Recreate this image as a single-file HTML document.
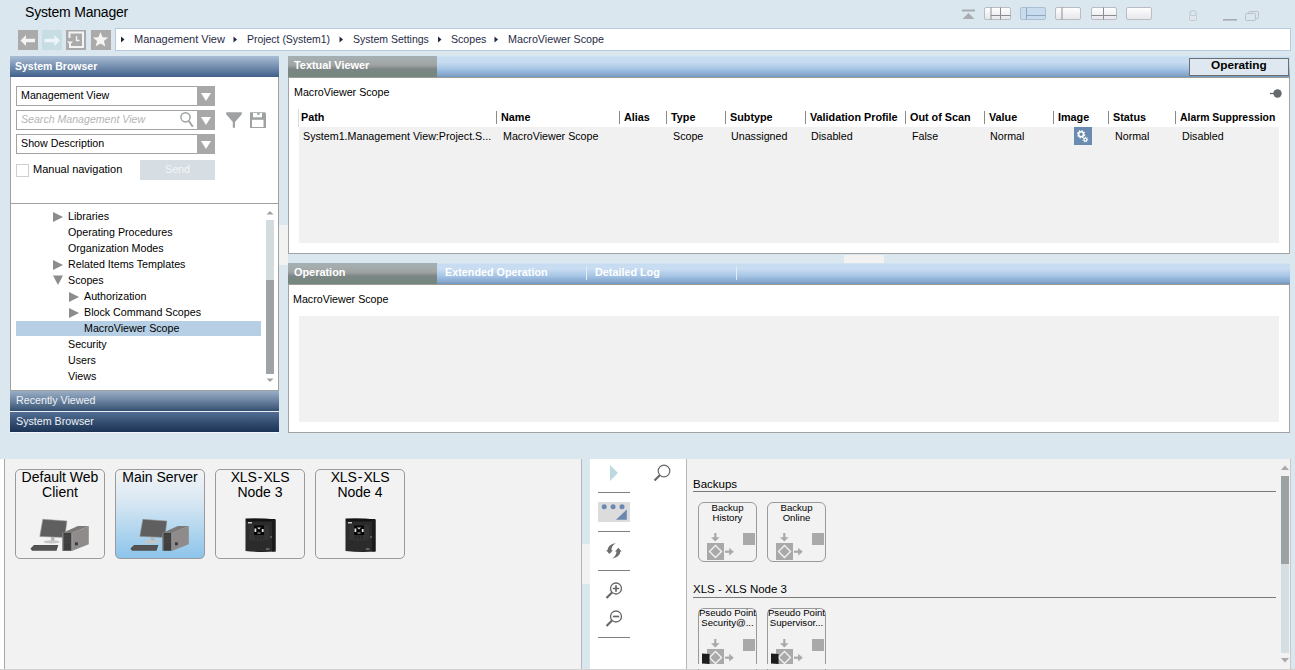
<!DOCTYPE html>
<html><head><meta charset="utf-8">
<style>
*{box-sizing:border-box;margin:0;padding:0}
html,body{width:1295px;height:670px;overflow:hidden;background:#dae7ef;font-family:"Liberation Sans",sans-serif;color:#000}
.a{position:absolute}
.t{position:absolute;white-space:nowrap;font-size:10.7px;line-height:13px}
.b{font-weight:bold}
</style></head><body>

<!-- Title -->
<div class="t" style="left:25px;top:4px;font-size:14px;letter-spacing:-0.2px;line-height:16px;color:#000">System Manager</div>

<!-- top right layout icons -->
<svg class="a" style="left:0;top:0" width="1295" height="28">
 <defs><linearGradient id="lg" x1="0" y1="0" x2="0" y2="1"><stop offset="0" stop-color="#ffffff"/><stop offset="1" stop-color="#e6e6ec"/></linearGradient></defs>
 <rect x="962" y="9.5" width="13" height="2" fill="#a9acaf"/>
 <path d="M962.5 19 L968.5 13 L974.5 19 Z" fill="#a9acaf"/>
 <rect x="984.5" y="7.5" width="26" height="12" rx="1.5" fill="url(#lg)" stroke="#b9bcc0"/>
 <path d="M991 7.5 V19.5 M1000.5 7.5 V19.5 M991 15.5 H1010.5" stroke="#8a8d90" stroke-width="1" fill="none"/>
 <rect x="1020.5" y="7.5" width="25" height="12" rx="1.5" fill="#c9dcee" stroke="#a9c0d6"/>
 <path d="M1026.5 7.5 V19.5 M1026.5 15.5 H1045.5" stroke="#8ea7c0" stroke-width="1" fill="none"/>
 <rect x="1055.5" y="7.5" width="25" height="12" rx="1.5" fill="url(#lg)" stroke="#b9bcc0"/>
 <path d="M1062 7.5 V19.5" stroke="#8a8d90" stroke-width="1" fill="none"/>
 <rect x="1091.5" y="7.5" width="25" height="12" rx="1.5" fill="url(#lg)" stroke="#b9bcc0"/>
 <path d="M1103.5 7.5 V19.5 M1091.5 15.5 H1116.5" stroke="#8a8d90" stroke-width="1" fill="none"/>
 <rect x="1126.5" y="7.5" width="25" height="12" rx="1.5" fill="url(#lg)" stroke="#b9bcc0"/>
 <path d="M1190 16 V13.5 A3 3 0 0 1 1196 13.5 V16" stroke="#c3cbd2" stroke-width="1.2" fill="none"/>
 <rect x="1189.5" y="15.5" width="7" height="5" rx="1" fill="#dfe6ec" stroke="#c3cbd2"/>
 <rect x="1223" y="19" width="14" height="1.6" fill="#a7abae"/>
 <rect x="1248.5" y="11.5" width="10" height="7" rx="1" fill="none" stroke="#b9c0c6"/>
 <rect x="1245.5" y="13.5" width="10" height="7" rx="1" fill="#dae7ef" stroke="#b9c0c6"/>
</svg>

<!-- toolbar buttons -->
<svg class="a" style="left:0;top:0" width="120" height="56">
 <rect x="18" y="30" width="20" height="20" fill="#aaaaaa"/>
 <path d="M20.5 40.5 L26 35 V38.8 H35 V42.3 H26 V46 Z" fill="#f4f4f4"/>
 <rect x="42" y="30" width="20" height="20" fill="#c5dde3"/>
 <path d="M60 40.5 L54.5 35 V38.8 H44.5 V42.3 H54.5 V46 Z" fill="#eef5f7"/>
 <rect x="66" y="30" width="20" height="20" fill="#aaaaaa"/>
 <path d="M69.5 38 V32.5 H83 V47 H70 V44" stroke="#f4f4f4" stroke-width="2" fill="none"/>
 <path d="M67 41.5 L70 44.8 L73 41.5 Z" fill="#f4f4f4"/>
 <path d="M76.5 36 V40.5 H79.5" stroke="#f4f4f4" stroke-width="1.3" fill="none"/>
 <rect x="91" y="30" width="20" height="20" fill="#aaaaaa"/>
 <path d="M100.5 32 L102.6 37.3 L108.2 37.5 L103.9 41 L105.4 46.5 L100.5 43.4 L95.6 46.5 L97.1 41 L92.8 37.5 L98.4 37.3 Z" fill="#f4f4f4"/>
</svg>
<!-- breadcrumb -->
<div class="a" style="left:115px;top:28px;width:1176px;height:23px;background:#fff;border:1px solid #b6cadd"></div>
<svg class="a" style="left:115px;top:28px" width="500" height="23">
 <path d="M6 8.5 L9.5 11.5 L6 14.5 Z" fill="#1c2840"/>
 <path d="M118.5 8.5 L122 11.5 L118.5 14.5 Z" fill="#1c2840"/>
 <path d="M224.5 8.5 L228 11.5 L224.5 14.5 Z" fill="#1c2840"/>
 <path d="M323 8.5 L326.5 11.5 L323 14.5 Z" fill="#1c2840"/>
 <path d="M379.5 8.5 L383 11.5 L379.5 14.5 Z" fill="#1c2840"/>
</svg>
<div class="t" style="left:134px;top:33px;color:#1f2b45;font-size:11px">Management View</div>
<div class="t" style="left:247px;top:33px;color:#1f2b45;font-size:10.45px">Project (System1)</div>
<div class="t" style="left:353px;top:33px;color:#1f2b45;font-size:10.5px">System Settings</div>
<div class="t" style="left:451px;top:33px;color:#1f2b45;font-size:10.6px">Scopes</div>
<div class="t" style="left:508px;top:33px;color:#1f2b45;font-size:10.75px">MacroViewer Scope</div>

<!-- LEFT PANEL -->
<div class="a" style="left:10px;top:56px;width:269px;height:21px;background:linear-gradient(#aabed5,#41608a)"></div>
<div class="t b" style="left:15px;top:60px;color:#fff;font-size:10.5px">System Browser</div>
<div class="a" style="left:10px;top:77px;width:269px;height:314px;background:#fff;border-left:1px solid #a0a0a0;border-right:1px solid #a0a0a0"></div>
<div class="a" style="left:10px;top:203px;width:269px;height:1px;background:#a0a0a0"></div>
<div class="a" style="left:10px;top:390px;width:269px;height:1px;background:#a0a0a0"></div>
<div class="a" style="left:10px;top:391px;width:269px;height:20px;background:linear-gradient(#9aaec4,#6f87a4 45%,#34506f)"></div>
<div class="a" style="left:10px;top:411px;width:269px;height:1px;background:#e8eef3"></div>
<div class="a" style="left:10px;top:412px;width:269px;height:20px;background:linear-gradient(#536f94,#344f72 50%,#1c3354)"></div>
<div class="a" style="left:10px;top:432px;width:269px;height:1px;background:#f4f7f9"></div>

<!-- left panel content -->
<div class="a" style="left:16px;top:86px;width:199px;height:20px;background:#fff;border:1px solid #a3a3a3"></div>
<div class="a" style="left:197px;top:86px;width:18px;height:20px;background:#a8a8a8"></div>
<div class="t" style="left:21px;top:89px;color:#000">Management View</div>
<div class="a" style="left:16px;top:110px;width:199px;height:20px;background:#fff;border:1px solid #a3a3a3"></div>
<div class="a" style="left:197px;top:110px;width:18px;height:20px;background:#a8a8a8"></div>
<div class="t" style="left:21px;top:113px;color:#b4b4b4;font-style:italic;font-size:10.6px">Search Management View</div>
<div class="a" style="left:16px;top:134px;width:199px;height:20px;background:#fff;border:1px solid #a3a3a3"></div>
<div class="a" style="left:197px;top:134px;width:18px;height:20px;background:#a8a8a8"></div>
<div class="t" style="left:21px;top:137px;color:#000">Show Description</div>
<svg class="a" style="left:0;top:80px" width="278" height="110">
 <path d="M201 13 H211 L206 21 Z" fill="#fff"/>
 <path d="M201 37 H211 L206 45 Z" fill="#fff"/>
 <path d="M201 61 H211 L206 69 Z" fill="#fff"/>
 <circle cx="185.5" cy="37.3" r="4.6" fill="none" stroke="#9ea2a3" stroke-width="1.5"/>
 <path d="M188.8 41 L192.8 46.8" stroke="#9ea2a3" stroke-width="1.8"/>
 <path d="M226.2 32.2 H241.8 V34.2 L235 42 V47.7 H232.8 V42 L226.2 34.2 Z" fill="#9ea2a3"/>
 <path d="M250 32.2 H265 L266 33.2 V48 H250 Z" fill="#9ea2a3"/>
 <rect x="253" y="33" width="9" height="4.3" fill="#fff"/>
 <rect x="257.2" y="33" width="2.5" height="1.8" fill="#9ea2a3"/>
 <rect x="252" y="39.8" width="11.5" height="7.2" fill="#fff"/>
 <rect x="16.5" y="84.5" width="12" height="12" fill="#fff" stroke="#cfcfcf"/>
</svg>
<div class="t" style="left:33px;top:163px;color:#000;font-size:11px">Manual navigation</div>
<div class="a" style="left:140px;top:160px;width:75px;height:20px;background:#d7dee3"></div>
<div class="t" style="left:165px;top:163px;color:#f2f5f7">Send</div>
<!-- tree -->
<div class="a" style="left:16px;top:321px;width:245px;height:15px;background:#b6cfe5"></div>
<svg class="a" style="left:0;top:200px" width="278" height="190">
 <path d="M53 12 L63 17 L53 22 Z" fill="#8c8c8c"/>
 <path d="M53 60 L63 65 L53 70 Z" fill="#8c8c8c"/>
 <path d="M53 75.5 L63 75.5 L58 85 Z" fill="#8c8c8c"/>
 <path d="M69 92 L79 97 L69 102 Z" fill="#8c8c8c"/>
 <path d="M69 108 L79 113 L69 118 Z" fill="#8c8c8c"/>
 <rect x="266" y="20" width="8" height="154" fill="#d3dbdf"/>
 <rect x="266" y="80" width="8" height="94" fill="#9ea3a5"/>
 <path d="M266.5 14.5 L270 11 L273.5 14.5 Z" fill="#9ea3a5"/>
 <path d="M266.5 178.5 L270 182 L273.5 178.5 Z" fill="#9ea3a5"/>
</svg>
<div class="t" style="left:68px;top:210px">Libraries</div>
<div class="t" style="left:68px;top:226px">Operating Procedures</div>
<div class="t" style="left:68px;top:242px">Organization Modes</div>
<div class="t" style="left:68px;top:258px">Related Items Templates</div>
<div class="t" style="left:68px;top:274px">Scopes</div>
<div class="t" style="left:84px;top:290px">Authorization</div>
<div class="t" style="left:84px;top:306px">Block Command Scopes</div>
<div class="t" style="left:84px;top:322px">MacroViewer Scope</div>
<div class="t" style="left:68px;top:338px">Security</div>
<div class="t" style="left:68px;top:354px">Users</div>
<div class="t" style="left:68px;top:370px">Views</div>
<div class="t" style="left:16px;top:394px;color:#eef2f6">Recently Viewed</div>
<div class="t" style="left:16px;top:415px;color:#eef2f6">System Browser</div>

<!-- RIGHT TOP PANEL -->
<div class="a" style="left:288px;top:56px;width:1002px;height:21px;background:linear-gradient(#dce9f5 0px,#c6dcf0 1px,#c9ddf2 6px,#b4cfea 10px,#a7c5e5 13px,#93b4da 16px,#8cabd0 18px,#8ba7c4 19px,#729dc6 20px,#729dc6 21px)"></div>
<div class="a" style="left:288px;top:56px;width:149px;height:21px;background:linear-gradient(#a3afb3 0px,#a5acad 4px,#9fa4a3 9px,#8f9695 11px,#7b8685 13px,#778680 17px,#738880 21px)"></div>
<div class="a" style="left:288px;top:77px;width:1002px;height:177px;background:#fff;border:1px solid #a3a3a3;border-top:1px solid #a09a94"></div>
<div class="a" style="left:299px;top:127px;width:980px;height:116px;background:#f1f1f1"></div>

<!-- right top content -->
<div class="t b" style="left:294px;top:59px;color:#fff;font-size:10.9px">Textual Viewer</div>
<div class="a" style="left:1189px;top:58px;width:100px;height:18px;background:#dfe8f0;border:1px solid #6f6f6f"></div>
<div class="t b" style="left:1211px;top:58px;color:#000;font-size:11.8px;line-height:14px">Operating</div>
<svg class="a" style="left:1260px;top:85px" width="30" height="18">
 <path d="M10 8.5 H16" stroke="#666a6c" stroke-width="1.3"/>
 <circle cx="17.5" cy="8.5" r="4.2" fill="#666a6c"/>
</svg>
<div class="t" style="left:294px;top:86px">MacroViewer Scope</div>
<div class="a" style="left:298px;top:109px;width:1px;height:18px;background:#dcdcdc"></div>
<svg class="a" style="left:0;top:108px" width="1295" height="20">
 <path d="M496.5 3 V16 M619.5 3 V16 M666.5 3 V16 M725.5 3 V16 M805.5 3 V16 M905.5 3 V16 M984.5 3 V16 M1053.5 3 V16 M1108.5 3 V16 M1175.5 3 V16" stroke="#8a8a8a" stroke-width="1"/>
</svg>
<div class="t b" style="left:301px;top:111px;font-size:10.8px">Path</div>
<div class="t b" style="left:501px;top:111px;font-size:10.8px">Name</div>
<div class="t b" style="left:624px;top:111px;font-size:10.8px">Alias</div>
<div class="t b" style="left:671px;top:111px;font-size:10.8px">Type</div>
<div class="t b" style="left:730px;top:111px;font-size:10.8px">Subtype</div>
<div class="t b" style="left:810px;top:111px;font-size:10.8px">Validation Profile</div>
<div class="t b" style="left:910px;top:111px;font-size:10.8px">Out of Scan</div>
<div class="t b" style="left:989px;top:111px;font-size:10.8px">Value</div>
<div class="t b" style="left:1058px;top:111px;font-size:10.8px">Image</div>
<div class="t b" style="left:1113px;top:111px;font-size:10.8px">Status</div>
<div class="t b" style="left:1180px;top:111px;font-size:10.4px">Alarm Suppression</div>
<div class="t" style="left:303px;top:130px">System1.Management View:Project.S...</div>
<div class="t" style="left:503px;top:130px">MacroViewer Scope</div>
<div class="t" style="left:673px;top:130px">Scope</div>
<div class="t" style="left:731px;top:130px">Unassigned</div>
<div class="t" style="left:811px;top:130px">Disabled</div>
<div class="t" style="left:912px;top:130px">False</div>
<div class="t" style="left:990px;top:130px">Normal</div>
<div class="a" style="left:1074px;top:127px;width:18px;height:18px;background:#6a8bb0"></div>
<svg class="a" style="left:1074px;top:127px" width="18" height="18">
 <circle cx="7.1" cy="7.2" r="2.5" fill="none" stroke="#fff" stroke-width="1.6"/>
 <path d="M9.77 8.03 L11.11 8.44 M8.41 9.68 L9.06 10.91 M6.27 9.87 L5.86 11.21 M4.62 8.51 L3.39 9.16 M4.43 6.37 L3.09 5.96 M5.79 4.72 L5.14 3.49 M7.93 4.53 L8.34 3.19 M9.58 5.89 L10.81 5.24 " stroke="#fff" stroke-width="1.3"/>
 <circle cx="11.4" cy="12.6" r="1.5" fill="none" stroke="#fff" stroke-width="1.2"/>
 <path d="M13.16 12.96 L14.24 13.18 M12.22 14.20 L12.72 15.18 M10.66 14.24 L10.21 15.24 M9.66 13.04 L8.59 13.31 M9.97 11.51 L9.09 10.85 M11.36 10.80 L11.33 9.70 M12.78 11.44 L13.62 10.74 " stroke="#fff" stroke-width="1.0"/>
</svg>
<div class="t" style="left:1115px;top:130px">Normal</div>
<div class="t" style="left:1182px;top:130px">Disabled</div>
<!-- splitters -->
<div class="a" style="left:279px;top:225px;width:9px;height:40px;background:#f2f2f2"></div>
<div class="a" style="left:844px;top:255px;width:40px;height:8px;background:#f2f2f2"></div>

<!-- RIGHT BOTTOM PANEL -->
<div class="a" style="left:288px;top:263px;width:1002px;height:21px;background:linear-gradient(#dce9f5 0px,#c6dcf0 1px,#c9ddf2 6px,#b4cfea 10px,#a7c5e5 13px,#93b4da 16px,#8cabd0 18px,#8ba7c4 19px,#729dc6 20px,#729dc6 21px)"></div>
<div class="a" style="left:288px;top:263px;width:149px;height:21px;background:linear-gradient(#a3afb3 0px,#a5acad 4px,#9fa4a3 9px,#8f9695 11px,#7b8685 13px,#778680 17px,#738880 21px)"></div>
<div class="a" style="left:288px;top:284px;width:1002px;height:149px;background:#fff;border:1px solid #a3a3a3;border-top:1px solid #a09a94"></div>
<div class="a" style="left:299px;top:316px;width:980px;height:106px;background:#f1f1f1"></div>

<!-- right bottom content -->
<div class="t b" style="left:294px;top:266px;color:#fff;font-size:10.9px">Operation</div>
<div class="t b" style="left:445px;top:266px;color:#fff;font-size:10.8px">Extended Operation</div>
<div class="t b" style="left:595px;top:266px;color:#fff;font-size:10.8px">Detailed Log</div>
<div class="a" style="left:586px;top:266px;width:1px;height:14px;background:#e2ecf5"></div>
<div class="a" style="left:736px;top:266px;width:1px;height:14px;background:#e2ecf5"></div>
<div class="t" style="left:293px;top:293px">MacroViewer Scope</div>

<!-- BOTTOM -->
<div class="a" style="left:0;top:459px;width:5px;height:211px;background:#fff"></div>
<div class="a" style="left:4px;top:459px;width:578px;height:211px;background:#f2f2f2;border-left:1px solid #a9a9a9;border-right:1px solid #b5b5b5"></div>
<div class="a" style="left:590px;top:459px;width:96px;height:211px;background:#fff"></div>
<div class="a" style="left:686px;top:459px;width:605px;height:211px;background:#f2f2f2;border-left:1px solid #b5b5b5"></div>
<div class="a" style="left:0;top:669px;width:1295px;height:1px;background:#d2d2d2"></div>

<!-- tiles -->
<div class="a" style="left:15px;top:469px;width:90px;height:90px;border:1px solid #9a9a9a;border-radius:5px;background:#f2f2f2"></div>
<div class="a" style="left:115px;top:469px;width:90px;height:90px;border:1px solid #9a9a9a;border-radius:5px;background:linear-gradient(#f2f4f6 0%,#d9e8f3 35%,#8cc4ea 100%)"></div>
<div class="a" style="left:215px;top:469px;width:90px;height:90px;border:1px solid #9a9a9a;border-radius:5px;background:#f2f2f2"></div>
<div class="a" style="left:315px;top:469px;width:90px;height:90px;border:1px solid #9a9a9a;border-radius:5px;background:#f2f2f2"></div>
<div class="t" style="left:15px;top:470px;width:90px;text-align:center;font-size:14px;line-height:15px;color:#000;white-space:normal">Default Web<br>Client</div>
<div class="t" style="left:115px;top:470px;width:90px;text-align:center;font-size:14px;line-height:15px;color:#000">Main Server</div>
<div class="t" style="left:215px;top:470px;width:90px;text-align:center;font-size:14px;line-height:15px;color:#000"><span style="word-spacing:-2.5px;letter-spacing:-0.2px">XLS - XLS</span><br>Node 3</div>
<div class="t" style="left:315px;top:470px;width:90px;text-align:center;font-size:14px;line-height:15px;color:#000"><span style="word-spacing:-2.5px;letter-spacing:-0.2px">XLS - XLS</span><br>Node 4</div>

<svg class="a" style="left:0;top:510px" width="420" height="50">
 <defs>
  <g id="pc">
   <path d="M13.8 9.3 L37.9 11 L35.8 27.5 L10.8 26.4 Z" fill="#5f5f5f" stroke="#9a9a9a" stroke-width="0.6"/>
   <rect x="22" y="27" width="3.5" height="4" fill="#b5b5b5"/>
   <ellipse cx="22.5" cy="31.8" rx="8.2" ry="1.6" fill="#c5c5c5"/>
   <path d="M1.5 38.6 L5 35 H29.3 L27.5 40.8 H3 Z" fill="#4e4e4e"/>
   <path d="M4 37 H27 M4 39 H26" stroke="#6a6a6a" stroke-width="0.4"/>
   <path d="M33.4 23 L48.8 16.1 H59.8 L43.4 23 Z" fill="#7c7979"/>
   <path d="M43.4 23 L59.8 16.1 V34.3 L43.4 40.8 Z" fill="#8f8b8b"/>
   <rect x="33.4" y="23" width="10" height="17.8" fill="#3f3f3f"/>
   <rect x="33.4" y="23" width="1" height="17.8" fill="#9a9a9a"/>
   <rect x="42.4" y="23" width="1" height="17.8" fill="#b0b0b0"/>
   <path d="M35 26 H41 M35 29 H41 M35 32 H41" stroke="#555" stroke-width="0.5"/>
   <rect x="46" y="32.3" width="2.8" height="3" fill="#3a3a3a"/>
  </g>
  <g id="xls">
   <path d="M0.5 0.5 Q15 -0.5 30.5 1.5 V33.5 Q15 34.5 0.5 33 Z" fill="#222"/>
   <rect x="1" y="3" width="29" height="30" fill="#2b2b2b"/>
   <rect x="1" y="1" width="29" height="2.5" fill="#141414"/>
   <rect x="27" y="1.5" width="3.5" height="32" fill="#1a1a1a"/>
   <rect x="3" y="4" width="4" height="1.5" fill="#c8c8c8"/>
   <rect x="4" y="7" width="5" height="15" fill="#333"/>
   <rect x="19" y="7" width="5" height="15" fill="#333"/>
   <rect x="9" y="7.5" width="10" height="10" fill="#050505"/>
   <rect x="9.5" y="10.5" width="1.8" height="3.5" fill="#e8e8e8"/>
   <rect x="16.8" y="11" width="1.8" height="3" fill="#e8e8e8"/>
   <path d="M12 9.5 H16 L14 11.5 Z" fill="#d8d8d8"/>
   <rect x="12.5" y="14.5" width="3" height="1" fill="#bdbdbd"/>
   <path d="M9 17.5 H19 V22 H9 Z M12.3 17.5 V22 M15.6 17.5 V22" stroke="#3c3c3c" stroke-width="0.6" fill="none"/>
   <rect x="25.5" y="18" width="1" height="2" fill="#888"/>
   <rect x="21" y="30.5" width="3.5" height="1" fill="#9a9a9a"/>
  </g>
 </defs>
 <use href="#pc" x="29" y="0"/>
 <use href="#pc" x="129" y="0"/>
 <use href="#xls" x="245" y="8"/>
 <use href="#xls" x="345" y="8"/>
</svg>

<!-- splitter strip -->
<div class="a" style="left:582px;top:544px;width:8px;height:40px;background:#f2f2f2"></div>

<!-- tool column -->
<svg class="a" style="left:590px;top:459px" width="96" height="211">
 <path d="M20 6 L28 14 L20 22 Z" fill="#bcd9e0"/>
 <circle cx="74" cy="12" r="5.8" fill="none" stroke="#666" stroke-width="1.2"/>
 <path d="M70 16 L64.5 21.5" stroke="#666" stroke-width="2.2"/>
 <rect x="8" y="33" width="32" height="1" fill="#7f7f7f"/>
 <rect x="8" y="43" width="32" height="20" fill="#dcdcdc"/>
 <circle cx="14.2" cy="47.8" r="2.5" fill="#6a88b0"/>
 <circle cx="23.1" cy="47.8" r="2.5" fill="#6a88b0"/>
 <circle cx="32" cy="47.8" r="2.5" fill="#6a88b0"/>
 <path d="M26 60.7 L36.8 50.6 V60.7 Z" fill="#6a88b0"/>
 <rect x="8" y="72" width="32" height="1" fill="#7f7f7f"/>
 <path d="M25.8 84 Q18 85.5 17.6 91.2 H16.1 L19.4 95.1 L22.9 91.2 H21.4 Q21.5 86.5 25.8 84 Z" fill="#6e6e6e"/>
 <path d="M22.2 99.6 Q30 98 30.4 92.6 H31.7 L28.4 88.7 L25 92.6 H26.5 Q26.5 96.5 22.2 99.6 Z" fill="#6e6e6e"/>
 <rect x="8" y="111" width="32" height="1" fill="#7f7f7f"/>
 <circle cx="26" cy="129.5" r="5.5" fill="#fff" stroke="#666" stroke-width="1.3"/>
 <path d="M22.8 129.5 H29.2 M26 126.3 V132.7" stroke="#666" stroke-width="1.7"/>
 <path d="M22 133.5 L16.5 139" stroke="#666" stroke-width="2.2"/>
 <circle cx="26" cy="157.5" r="5.5" fill="#fff" stroke="#666" stroke-width="1.3"/>
 <path d="M22.8 157.5 H29.2" stroke="#666" stroke-width="1.7"/>
 <path d="M22 161.5 L16.5 167" stroke="#666" stroke-width="2.2"/>
 <rect x="8" y="178" width="32" height="1" fill="#7f7f7f"/>
</svg>

<!-- right pane -->
<div class="t" style="left:693px;top:478px;font-size:11.5px;line-height:13px;color:#000">Backups</div>
<div class="a" style="left:693px;top:491px;width:583px;height:1px;background:#7a7a7a"></div>
<div class="t" style="left:693px;top:583px;font-size:11.5px;line-height:13px;color:#000">XLS - XLS Node 3</div>
<div class="a" style="left:693px;top:597px;width:583px;height:1px;background:#7a7a7a"></div>

<div class="a" style="left:698px;top:502px;width:59px;height:60px;border:1px solid #9a9a9a;border-radius:6px"></div>
<div class="a" style="left:767px;top:502px;width:59px;height:60px;border:1px solid #9a9a9a;border-radius:6px"></div>
<div class="t" style="left:698px;top:503px;width:59px;text-align:center;font-size:9.6px;line-height:10px;color:#000">Backup<br>History</div>
<div class="t" style="left:767px;top:503px;width:59px;text-align:center;font-size:9.6px;line-height:10px;color:#000">Backup<br>Online</div>
<div class="a" style="left:698px;top:608px;width:59px;height:62px;border:1px solid #9a9a9a;border-bottom:none;border-radius:6px 6px 0 0"></div>
<div class="a" style="left:767px;top:608px;width:59px;height:62px;border:1px solid #9a9a9a;border-bottom:none;border-radius:6px 6px 0 0"></div>
<div class="t" style="left:698px;top:608px;width:59px;text-align:center;font-size:9.6px;line-height:10px;color:#000">Pseudo Point<br>Security@...</div>
<div class="t" style="left:767px;top:608px;width:59px;text-align:center;font-size:9.6px;line-height:10px;color:#000">Pseudo Point<br>Supervisor...</div>
<svg class="a" style="left:690px;top:520px" width="150" height="150">
 <defs>
  <g id="dp">
   <path d="M25.3 13 V18.5" stroke="#a9a9a9" stroke-width="2.2"/>
   <path d="M21 17.3 L25.3 21.5 L29.6 17.3 Z" fill="#a9a9a9"/>
   <rect x="17" y="23" width="17" height="17" fill="#a9a9a9"/>
   <path d="M25.5 25.5 L31.5 31.5 L25.5 37.5 L19.5 31.5 Z" fill="none" stroke="#f2f2f2" stroke-width="1.4"/>
   <path d="M35 31.7 H40" stroke="#a9a9a9" stroke-width="2.2"/>
   <path d="M39.2 27.8 L43.8 31.7 L39.2 35.6 Z" fill="#a9a9a9"/>
   <rect x="53" y="13" width="12" height="12" fill="#a9a9a9"/>
  </g>
 </defs>
 <use href="#dp" x="0" y="0"/>
 <use href="#dp" x="69" y="0"/>
 <use href="#dp" x="0" y="106"/>
 <use href="#dp" x="69" y="106"/>
 <path d="M12 133.5 L19.5 134 V144 L12 143.5 Z" fill="#1d1d1d"/>
 <path d="M81 133.5 L88.5 134 V144 L81 143.5 Z" fill="#1d1d1d"/>
</svg>

<div class="a" style="left:687px;top:664px;width:590px;height:5px;background:#f2f2f2"></div>
<!-- right scrollbar -->
<svg class="a" style="left:1278px;top:459px" width="17" height="211">
 <path d="M3 11 L7 6.5 L11 11 Z" fill="#a9a9a9"/>
 <rect x="3" y="17" width="8" height="177" fill="#d5dee2"/>
 <rect x="3" y="17" width="8" height="88" fill="#9ca1a3"/>
 <path d="M3 199 L7 203.5 L11 199 Z" fill="#a9a9a9"/>
</svg>
<div class="a" style="left:1290px;top:459px;width:1px;height:211px;background:#c8c8c8"></div>
</body></html>
